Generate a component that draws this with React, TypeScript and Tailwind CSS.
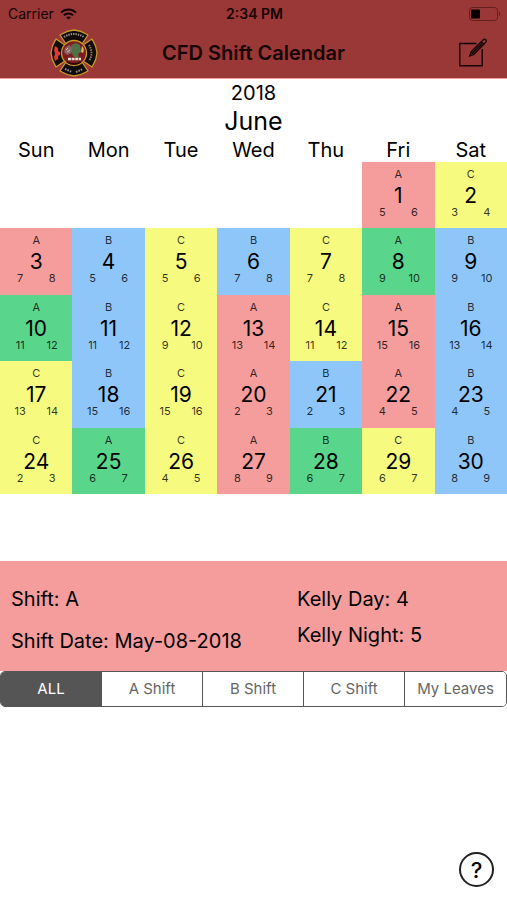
import { useState } from "react";

type Tone = "red" | "blue" | "yellow" | "green";
type Day = [date: number, shift: string, day: number, night: number, tone: Tone];

const tones: Record<Tone, string> = {
  red: "bg-[#f49d9c]",
  blue: "bg-[#8fc6fa]",
  yellow: "bg-[#f6fb80]",
  green: "bg-[#59d68c]",
};

const weekdays = ["Sun", "Mon", "Tue", "Wed", "Thu", "Fri", "Sat"];

const weeks: (Day | null)[][] = [
  [null, null, null, null, null, [1, "A", 5, 6, "red"], [2, "C", 3, 4, "yellow"]],
  [
    [3, "A", 7, 8, "red"],
    [4, "B", 5, 6, "blue"],
    [5, "C", 5, 6, "yellow"],
    [6, "B", 7, 8, "blue"],
    [7, "C", 7, 8, "yellow"],
    [8, "A", 9, 10, "green"],
    [9, "B", 9, 10, "blue"],
  ],
  [
    [10, "A", 11, 12, "green"],
    [11, "B", 11, 12, "blue"],
    [12, "C", 9, 10, "yellow"],
    [13, "A", 13, 14, "red"],
    [14, "C", 11, 12, "yellow"],
    [15, "A", 15, 16, "red"],
    [16, "B", 13, 14, "blue"],
  ],
  [
    [17, "C", 13, 14, "yellow"],
    [18, "B", 15, 16, "blue"],
    [19, "C", 15, 16, "yellow"],
    [20, "A", 2, 3, "red"],
    [21, "B", 2, 3, "blue"],
    [22, "A", 4, 5, "red"],
    [23, "B", 4, 5, "blue"],
  ],
  [
    [24, "C", 2, 3, "yellow"],
    [25, "A", 6, 7, "green"],
    [26, "C", 4, 5, "yellow"],
    [27, "A", 8, 9, "red"],
    [28, "B", 6, 7, "green"],
    [29, "C", 6, 7, "yellow"],
    [30, "B", 8, 9, "blue"],
  ],
  [null, null, null, null, null, null, null],
];

const filters = ["ALL", "A Shift", "B Shift", "C Shift", "My Leaves"];

function WifiIcon() {
  return (
    <svg width="17" height="12" viewBox="0 0 17 12" fill="none" stroke="#160404" strokeWidth="2" aria-hidden="true">
      <path d="M1 4.6C5.2.4 11.8.4 16 4.6" />
      <path d="M3.8 7.3c2.7-2.5 6.7-2.5 9.4 0" />
      <path d="M8.5 11.6 6.1 9.3c1.4-1.2 3.4-1.2 4.8 0z" fill="#160404" stroke="none" />
    </svg>
  );
}

function BatteryIcon() {
  return (
    <svg width="32" height="14" viewBox="0 0 32 14" fill="none" aria-hidden="true">
      <rect x="0.5" y="0.5" width="28" height="13" rx="3" stroke="#632020" />
      <path d="M30 4.8c1.6.6 1.6 3.8 0 4.4z" fill="#632020" />
      <rect x="2" y="2.5" width="9" height="9" rx="1" fill="#080000" />
    </svg>
  );
}

function Crest() {
  return (
    <svg width="48" height="48" viewBox="0 0 48 48" role="img" aria-label="Fire department crest">
      <g fill="#120b0b" stroke="#c79a2b" strokeWidth="1.3" strokeLinejoin="round">
        <path d="M10 6C13 5 14 2 24 1c10 1 11 4 14 5l-6 9q-8-4-16 0z" />
        <path d="M10 42c3 1 4 4 14 5 10-1 11-4 14-5l-6-9q-8 4-16 0z" />
        <path d="M6 10C5 13 2 14 1 24c1 10 4 11 5 14l9-6q-4-8 0-16z" />
        <path d="M42 10c1 3 4 4 5 14-1 10-4 11-5 14l-9-6q4-8 0-16z" />
      </g>
      <path d="M14 8q10-6 20 0" fill="none" stroke="#9a8f86" strokeWidth="2" strokeDasharray="1.4 1" />
      <path d="M15 40l7 3M26 43l7-3" stroke="#9a8f86" strokeWidth="2" strokeDasharray="1.6 1" />
      <path d="M39 16q5 8 0 16" fill="none" stroke="#8d8179" strokeWidth="2" strokeDasharray="1.4 1" />
      <path d="M5 17l3 2v3l2 1v3l-2 1v3l-3 2-1-4 1-3-1-4z" fill="#e33630" />
      <circle cx="24" cy="24" r="12.5" fill="#7d1d1f" stroke="#c79a2b" strokeWidth="1.3" />
      <path d="M15 19l4-3 4 3-1 5-5 2-3-3z" fill="#8c6262" />
      <path d="M21 16l5-2 4 2 1 7-3 2 1 4-5-1-3-5 1-3z" fill="#4d7246" />
      <path d="M32 17q3 3 1 7l-2-1z" fill="#d7b565" />
      <path d="M16 21l2-2M17 23l3-2" stroke="#b9cadc" />
      <path d="M18 30h13" stroke="#eadfd8" strokeWidth="2.6" strokeDasharray="3 .6" />
      <path d="M17 33q7 4 14 0" fill="none" stroke="#2b0809" strokeWidth="2" />
    </svg>
  );
}

function ComposeIcon() {
  return (
    <svg width="28" height="29" viewBox="0 0 28 29" fill="none" stroke="#160404" strokeWidth="1.4" aria-hidden="true">
      <path d="M17.5 5.5H.8v22.3h22.4V11" />
      <path d="M10.8 17.8l1.5-4.1L24.3 1.7q1.2-1 2.4.1 1 1.2 0 2.4L14.8 16.3zM12.3 13.7l2.5 2.6M22.2 3.8l2.4 2.5M13.6 15l10-10" />
    </svg>
  );
}

function DayCell({ entry }: { entry: Day }) {
  const [date, shift, day, night] = entry;
  return (
    <button type="button" className="flex w-full flex-col items-center text-black">
      <span className="text-[11px] leading-6 text-black/80">{shift}</span>
      <span className="text-[21px] leading-5">{date}</span>
      <span className="flex text-[11px] leading-3 text-black/80">
        <span className="w-8">{day}</span>
        <span className="w-8">{night}</span>
      </span>
    </button>
  );
}

export default function App() {
  const [active, setActive] = useState("ALL");

  return (
    <div className="flex min-h-screen flex-col bg-white font-['Inter','Liberation_Sans',sans-serif] text-black">
      <header className="border-b border-[#f49d9c] bg-[#9a3737] text-[#160404]">
        <div className="grid h-[27px] grid-cols-3 items-center pr-[6px] pl-2">
          <div className="flex items-center gap-[6px] text-[14px]">
            Carrier
            <WifiIcon />
          </div>
          <div className="text-center text-[14px] font-semibold">2:34 PM</div>
          <div className="flex justify-end">
            <BatteryIcon />
          </div>
        </div>
        <div className="grid h-[51px] grid-cols-[1fr_auto_1fr] items-center pr-5 pl-[50px]">
          <Crest />
          <h1 className="pr-[30px] text-[20px] font-semibold">CFD Shift Calendar</h1>
          <button type="button" aria-label="New entry" className="justify-self-end">
            <ComposeIcon />
          </button>
        </div>
      </header>

      <main className="flex flex-1 flex-col">
        <div className="pt-[2px] text-center">
          <p className="text-[20px] leading-6">2018</p>
          <h2 className="text-[25px] leading-8">June</h2>
        </div>

        <table className="w-full table-fixed border-collapse text-center">
          <thead>
            <tr className="h-[25px]">
              {weekdays.map((name) => (
                <th key={name} scope="col" className="p-0 align-bottom text-[20px] leading-6 font-normal">
                  {name}
                </th>
              ))}
            </tr>
          </thead>
          <tbody>
            {weeks.map((week, row) => (
              <tr key={row} className="h-[66px] even:h-[67px]">
                {week.map((entry, column) => (
                  <td key={column} className={entry ? `p-0 align-top ${tones[entry[4]]}` : "p-0"}>
                    {entry && <DayCell entry={entry} />}
                  </td>
                ))}
              </tr>
            ))}
          </tbody>
        </table>

        <section className="grid h-[110px] grid-cols-[286px_1fr] bg-[#f49d9c] px-[11px] pt-[26px] text-[20px] leading-6">
          <div className="flex flex-col gap-[18px]">
            <p>Shift: A</p>
            <p>Shift Date: May-08-2018</p>
          </div>
          <div className="flex flex-col gap-3">
            <p>Kelly Day: 4</p>
            <p>Kelly Night: 5</p>
          </div>
        </section>

        <div className="grid h-[36px] grid-cols-5 divide-x divide-[#555555] overflow-hidden rounded-[5px] border border-[#555555]">
          {filters.map((name) => (
            <button
              key={name}
              type="button"
              aria-pressed={active === name}
              onClick={() => setActive(name)}
              className={
                active === name
                  ? "bg-[#555555] text-[15px] whitespace-nowrap text-white"
                  : "bg-white text-[15px] whitespace-nowrap text-[#666666]"
              }
            >
              {name}
            </button>
          ))}
        </div>

        <div className="mt-auto flex justify-end px-[13px] pb-[13px]">
          <button
            type="button"
            aria-label="Help"
            className="flex size-[35px] items-center justify-center rounded-full border-2 border-[#222222] text-[22px] leading-none font-medium"
          >
            ?
          </button>
        </div>
      </main>
    </div>
  );
}
